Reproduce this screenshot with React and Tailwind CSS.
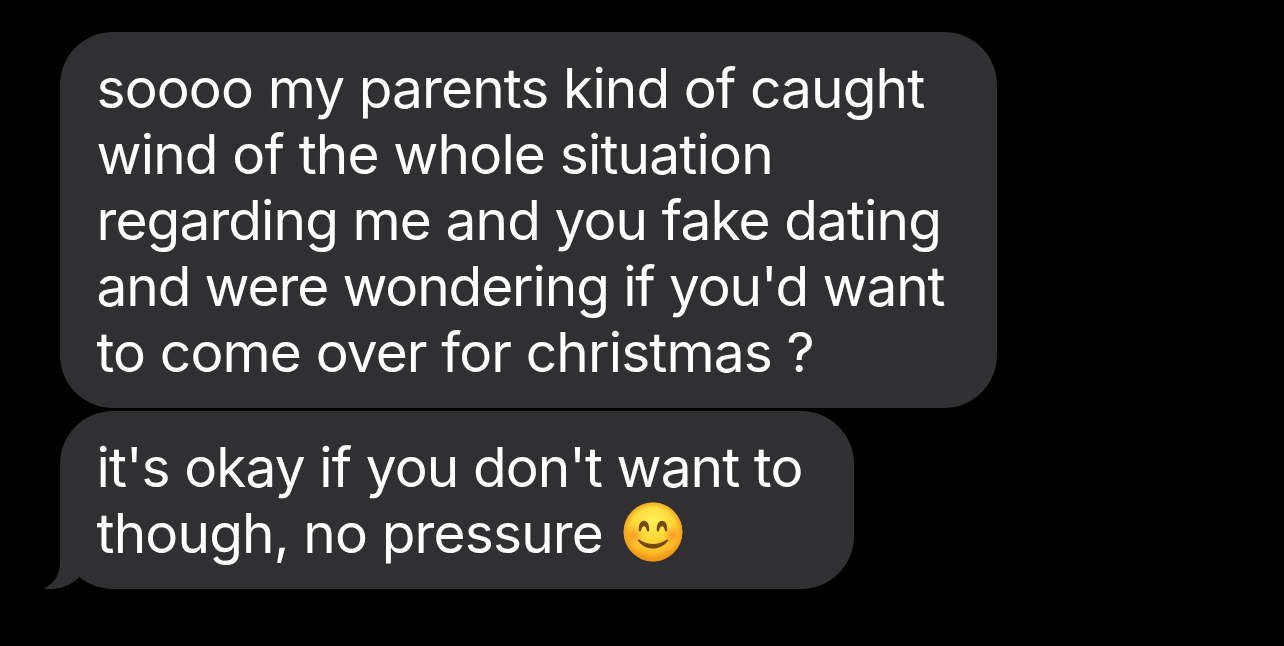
import React from 'react'

const messages = [
  {
    id: 1,
    size: 'h-[376px] w-[937px]',
    lines: [
      { text: 'soooo my parents kind of caught', tracking: 'tracking-[-0.88px]' },
      { text: 'wind of the whole situation', tracking: 'tracking-[-0.83px]' },
      { text: 'regarding me and you fake dating', tracking: 'tracking-[-0.89px]' },
      { text: "and were wondering if you'd want", tracking: 'tracking-[-1.11px]' },
      { text: 'to come over for christmas ?', tracking: 'tracking-[-0.86px]' },
    ],
  },
  {
    id: 2,
    size: 'h-[178px] w-[794px]',
    tail: true,
    lines: [
      { text: "it's okay if you don't want to", tracking: 'tracking-[-0.91px]' },
      { text: 'though, no pressure', tracking: 'tracking-[-0.84px]', emoji: true },
    ],
  },
]

const SmilingFace = () => (
  <svg
    viewBox="0 0 60 60"
    role="img"
    aria-label="smiling face"
    className="relative -top-px ml-5 h-[60px] w-[60px] shrink-0"
  >
    <defs>
      <radialGradient id="face" cx="0.5" cy="0.3" r="0.72">
        <stop offset="0" stopColor="#fff156" />
        <stop offset="0.4" stopColor="#ffdc3c" />
        <stop offset="0.75" stopColor="#fdbb2a" />
        <stop offset="1" stopColor="#ea8a10" />
      </radialGradient>
      <radialGradient id="edge">
        <stop offset="0.82" stopColor="#f39a1a" stopOpacity="0" />
        <stop offset="1" stopColor="#ee9416" stopOpacity="0.7" />
      </radialGradient>
      <radialGradient id="blush">
        <stop offset="0" stopColor="#ff7a1c" stopOpacity="0.6" />
        <stop offset="1" stopColor="#ff8a1c" stopOpacity="0" />
      </radialGradient>
    </defs>
    <circle cx="30" cy="30" r="29.4" fill="url(#face)" />
    <circle cx="30" cy="30" r="29.4" fill="url(#edge)" />
    <circle cx="10.5" cy="33" r="10" fill="url(#blush)" />
    <circle cx="49.5" cy="33" r="10" fill="url(#blush)" />
    <g fill="#744806">
      <path d="M15.8 28.2C15.5 22.4 17.6 18.8 20.9 18.8C24.3 18.8 26.5 22.4 26.2 28.2C26.1 29.9 24.1 30 23.8 28.3C23.3 25.4 22.4 24.2 21 24.2C19.6 24.2 18.7 25.4 18.2 28.3C17.9 30 15.9 29.9 15.8 28.2Z" />
      <path d="M33.8 28.2C33.5 22.4 35.7 18.8 39.1 18.8C42.4 18.8 44.5 22.4 44.2 28.2C44.1 29.9 42.1 30 41.8 28.3C41.3 25.4 40.4 24.2 39 24.2C37.6 24.2 36.7 25.4 36.2 28.3C35.9 30 33.9 29.9 33.8 28.2Z" />
      <path d="M15.1 38.9C14.3 37.9 15.2 37.1 16.3 37.8C24.9 43.5 35.1 43.5 43.7 37.8C44.8 37.1 45.7 37.9 44.9 38.9C37.5 48.9 22.5 48.9 15.1 38.9Z" />
    </g>
  </svg>
)

const Tail = () => (
  <svg viewBox="0 0 40 50" className="absolute bottom-0 -left-[17px] h-[50px] w-10" fill="#303032">
    <path d="M17 0V23C17 36 11 45 1 49.5C14 51.5 26 48 36 38.6L32 0Z" />
  </svg>
)

const Bubble = ({ size, lines, tail }) => (
  <div
    className={`relative rounded-[53px] bg-[#303032] pt-[23px] pl-[36.5px] font-['Inter',sans-serif] text-[55px] leading-[66px] font-[430] text-white ${size}`}
  >
    {tail && <Tail />}
    {lines.map((line) => (
      <div key={line.text} className="relative flex h-[66px] items-center whitespace-pre">
        <span className={line.tracking}>{line.text}</span>
        {line.emoji && <SmilingFace />}
      </div>
    ))}
  </div>
)

const App = () => (
  <main className="flex h-screen w-screen flex-col items-start gap-[3px] overflow-hidden bg-black pt-8 pl-[60px]">
    {messages.map((message) => (
      <Bubble key={message.id} {...message} />
    ))}
  </main>
)

export default App
